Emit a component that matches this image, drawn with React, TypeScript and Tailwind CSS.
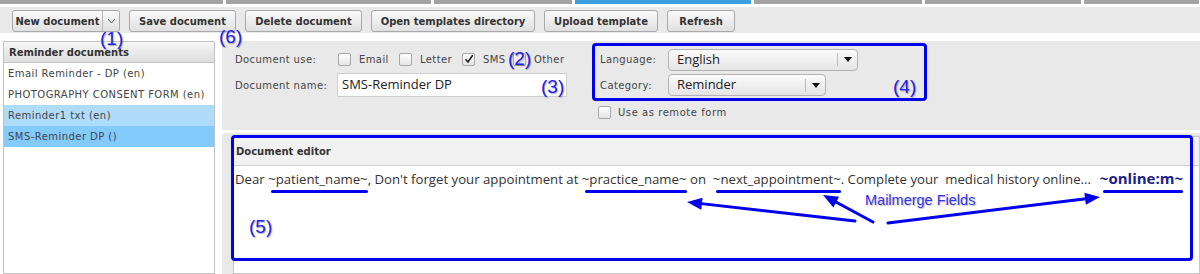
import React from 'react';

const ui = { fontFamily: '"DejaVu Sans", Verdana, sans-serif' };
const body = { fontFamily: '"Open Sans", "Segoe UI", sans-serif' };
const arial = { fontFamily: '"Liberation Sans", Arial, sans-serif' };

const tabs = [
  { w: 223, blue: false },
  { w: 205, blue: false },
  { w: 138, blue: false },
  { w: 176, blue: true },
  { w: 168, blue: false },
  { w: 156, blue: false },
  { w: 115, blue: false },
];

const buttons = [
  { label: 'Open templates directory', w: 164 },
  { label: 'Upload template', w: 114 },
  { label: 'Refresh', w: 68 },
];

const docs = [
  { name: 'Email Reminder - DP (en)', bg: '' },
  { name: 'PHOTOGRAPHY CONSENT FORM (en)', bg: '' },
  { name: 'Reminder1 txt (en)', bg: 'bg-[#b0dcfb]' },
  { name: 'SMS-Reminder DP ()', bg: 'bg-[#82cbfc]' },
];

function Checkbox({ checked = false }: { checked?: boolean }) {
  return (
    <span className="w-[13px] h-[13px] border border-[#a8a8a8] rounded-[2px] bg-gradient-to-b from-[#ffffff] to-[#e4e4e4] flex items-center justify-center">
      {checked && (
        <svg width="10" height="10" viewBox="0 0 10 10">
          <path d="M1.5 5.2 L4 8 L8.8 1" fill="none" stroke="#222" strokeWidth="1.6" />
        </svg>
      )}
    </span>
  );
}

function Select({ value, w }: { value: string; w: number }) {
  return (
    <div
      className="h-[22px] rounded-[4px] border border-[#b3b3b3] bg-gradient-to-b from-[#fbfbfb] to-[#e4e4e4] flex items-center tracking-normal"
      style={{ width: w }}
    >
      <span className="flex-1 pl-[8px] text-[13px] text-[#222]" style={body}>
        {value}
      </span>
      <span className="w-px h-[13px] bg-[#bdbdbd]" />
      <span className="w-[19px] flex justify-center">
        <svg width="8" height="5" viewBox="0 0 8 5">
          <path d="M0 0 H8 L4 5 Z" fill="#111" />
        </svg>
      </span>
    </div>
  );
}

function Note({ n, x, y }: { n: number; x: number; y: number }) {
  return (
    <span
      className="absolute text-[19px] leading-none text-[#2323ee] [text-shadow:1px_1px_1px_rgba(0,0,0,0.3)]"
      style={{ ...arial, left: x, top: y }}
    >
      ({n})
    </span>
  );
}

function Field({ children, bold = false }: { children: React.ReactNode; bold?: boolean }) {
  return (
    <span className={bold ? 'relative ml-[2px] font-bold text-[15px] text-[#20208a]' : 'relative'}>
      {children}
      <span className="absolute left-[3px] right-0 bottom-[-5px] h-[3px] rounded-full bg-[#0000ee]" />
    </span>
  );
}

function arrowHead(x1: number, y1: number, x2: number, y2: number) {
  const a = Math.atan2(y2 - y1, x2 - x1);
  const len = 15;
  const half = 6;
  const bx = x2 - len * Math.cos(a);
  const by = y2 - len * Math.sin(a);
  const px = -Math.sin(a) * half;
  const py = Math.cos(a) * half;
  return `${x2},${y2} ${bx + px},${by + py} ${bx - px},${by - py}`;
}

const arrows = [
  [855, 221, 687, 202],
  [873, 222, 823, 195],
  [888, 223, 1100, 197],
];

export default function App() {
  return (
    <div className="relative w-[1200px] h-[274px] overflow-hidden bg-white text-[#333]" style={ui}>
      {/* tab strip */}
      <div className="flex gap-[3px] h-[4px]">
        {tabs.map((t, i) => (
          <div
            key={i}
            className={t.blue ? 'h-full bg-[#3d9ee0]' : 'h-full bg-[#a3a3a3]'}
            style={{ width: t.w }}
          />
        ))}
      </div>

      {/* toolbar */}
      <div className="mt-[3px] h-[26px] bg-[#e9e9e9] flex items-start pt-[3px] pl-[12px] gap-[9px]">
        <div className="w-[108px] h-[22px] flex border border-[#a9a9a9] rounded-[3px] bg-gradient-to-b from-[#fafafa] to-[#e0e0e0] text-[10px] font-bold">
          <span className="flex-1 flex items-center justify-center">New document</span>
          <span className="w-[17px] border-l border-[#b8b8b8] flex items-center justify-center">
            <svg width="7" height="4" viewBox="0 0 7 4">
              <path d="M0 0 L3.5 4 L7 0" fill="none" stroke="#555" strokeWidth="1" />
            </svg>
          </span>
        </div>
        <div className="w-[107px] h-[22px] flex items-center justify-center border border-[#a9a9a9] rounded-[3px] bg-gradient-to-b from-[#fafafa] to-[#e0e0e0] text-[10px] font-bold">
          Save document
        </div>
        <div className="w-[117px] h-[22px] flex items-center justify-center border border-[#a9a9a9] rounded-[3px] bg-gradient-to-b from-[#fafafa] to-[#e0e0e0] text-[10px] font-bold">
          Delete document
        </div>
        {buttons.map((b) => (
          <div
            key={b.label}
            className="h-[22px] flex items-center justify-center border border-[#a9a9a9] rounded-[3px] bg-gradient-to-b from-[#fafafa] to-[#e0e0e0] text-[10px] font-bold"
            style={{ width: b.w }}
          >
            {b.label}
          </div>
        ))}
      </div>

      {/* main */}
      <div className="mt-[8px] flex h-[233px]">
        {/* left list */}
        <div className="ml-[3px] w-[212px] border border-[#c2c2c2] flex flex-col">
          <div className="h-[21px] shrink-0 bg-gradient-to-b from-[#f7f7f7] to-[#dddddd] border-b border-[#c2c2c2] flex items-center pl-[5px] text-[10px] font-bold">
            Reminder documents
          </div>
          {docs.map((d) => (
            <div key={d.name} className={`h-[21px] flex items-center pl-[4px] text-[10px] tracking-[0.45px] text-[#444] ${d.bg}`}>
              {d.name}
            </div>
          ))}
        </div>

        {/* right column */}
        <div className="ml-[7px] flex-1 flex flex-col">
          <div className="h-[89px] bg-[#e9e9e9] flex">
            <div className="w-[370px] pl-[13px] pt-[9px] text-[10px] tracking-[0.4px] text-[#444]">
              <div className="h-[18px] flex items-center">
                <span className="w-[103px]">Document use:</span>
                <Checkbox />
                <span className="ml-[8px] w-[40px]">Email</span>
                <Checkbox />
                <span className="ml-[8px] w-[42px]">Letter</span>
                <Checkbox checked />
                <span className="ml-[8px] w-[30px]">SMS</span>
                <Checkbox />
                <span className="ml-[8px]">Other</span>
              </div>
              <div className="mt-[5px] flex items-center">
                <span className="w-[102px]">Document name:</span>
                <div className="w-[230px] h-[24px] bg-white border border-[#cfcfcf] flex items-center pl-[4px] text-[13px] tracking-normal text-[#222]" style={body}>
                  SMS-Reminder DP
                </div>
              </div>
            </div>

            <div className="pt-[2px]">
              <div className="w-[335px] h-[58px] border-[3px] border-[#0000ee] rounded-[4px] pl-[5px] pt-[3px] text-[10px] tracking-[0.4px] text-[#444]">
                <div className="flex items-center h-[21px]">
                  <span className="w-[68px]">Language:</span>
                  <Select value="English" w={190} />
                </div>
                <div className="flex items-center h-[22px] mt-[4px]">
                  <span className="w-[68px]">Category:</span>
                  <Select value="Reminder" w={158} />
                </div>
              </div>
              <div className="mt-[4px] ml-[6px] flex items-center text-[10px] tracking-[0.55px] text-[#444]">
                <Checkbox />
                <span className="ml-[7px]">Use as remote form</span>
              </div>
            </div>
          </div>

          {/* editor */}
          <div className="mt-[3px] flex-1 bg-[#e9e9e9] rounded-tl-[4px] pl-[11px] pt-[3px]">
            <div className="h-full bg-white border border-[#c8c8c8]">
              <div className="h-[29px] bg-[#f1f1f1] border-b border-[#cfcfcf] flex items-center pl-[2px] text-[10px] font-bold">
                Document editor
              </div>
              <div className="pl-[1px] pt-[3px] text-[13.2px] leading-[18px] text-[#333] whitespace-pre" style={body}>
                {'Dear '}
                <Field>~patient_name~</Field>
                {", Don't forget your appointment at "}
                <Field>~practice_name~</Field>
                {' on  '}
                <Field>~next_appointment~</Field>
                {'. Complete your  medical history online...  '}
                <Field bold>~online:m~</Field>
              </div>
            </div>
          </div>
        </div>
      </div>

      {/* annotations */}
      <div className="absolute left-[231px] top-[135px] w-[962px] h-[126px] border-[3px] border-[#0000ee] rounded-[4px] pointer-events-none" />
      <svg className="absolute left-0 top-0 pointer-events-none" width="1200" height="274">
        {arrows.map(([x1, y1, x2, y2], i) => {
          const a = Math.atan2(y2 - y1, x2 - x1);
          return (
            <g key={i}>
              <line
                x1={x1}
                y1={y1}
                x2={x2 - 10 * Math.cos(a)}
                y2={y2 - 10 * Math.sin(a)}
                stroke="#0000ee"
                strokeWidth="3"
                strokeLinecap="round"
              />
              <polygon points={arrowHead(x1, y1, x2, y2)} fill="#0000ee" />
            </g>
          );
        })}
      </svg>
      <span
        className="absolute left-[865px] top-[193px] text-[14.5px] leading-none text-[#3434ee] [text-shadow:1px_1px_1px_rgba(0,0,0,0.25)]"
        style={arial}
      >
        Mailmerge Fields
      </span>
      <Note n={1} x={100} y={29} />
      <Note n={6} x={219} y={27} />
      <Note n={2} x={508} y={49} />
      <Note n={3} x={541} y={77} />
      <Note n={4} x={893} y={77} />
      <Note n={5} x={249} y={217} />
    </div>
  );
}
